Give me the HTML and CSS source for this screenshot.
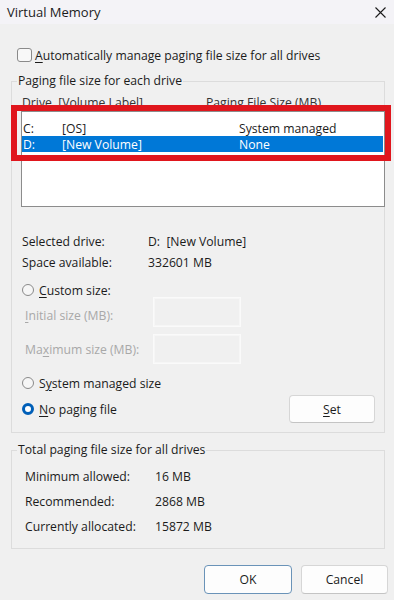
FILE: index.html
```html
<!DOCTYPE html>
<html lang="en">
<head>
    <meta charset="UTF-8">
    <meta name="viewport" content="width=device-width, initial-scale=1.0">
    <title>Virtual Memory</title>
    <link rel="stylesheet" href="styles.css">
</head>
<body>
    <div class="titlebar">
        <span class="title">Virtual Memory</span>
        <svg class="close" width="11" height="11" viewBox="0 0 11 11">
            <path d="M0.5 0.5 L10.5 10.5 M10.5 0.5 L0.5 10.5" stroke="#1b1b1b" stroke-width="1.1" fill="none"/>
        </svg>
    </div>

    <div class="dialog">
        <label class="check-row">
            <span class="checkbox"></span>
            <span><u>A</u>utomatically manage paging file size for all drives</span>
        </label>

        <fieldset class="group group-drives">
            <legend>Paging file size for each drive</legend>

            <div class="list-head">
                <span class="col-drive">Drive &nbsp;[Volume Label]</span>
                <span class="col-size">Paging File Size (MB)</span>
            </div>

            <div class="listbox">
                <div class="list-row">
                    <span class="col-letter">C:</span>
                    <span class="col-label">[OS]</span>
                    <span class="col-value">System managed</span>
                </div>
                <div class="list-row selected">
                    <span class="col-letter">D:</span>
                    <span class="col-label">[New Volume]</span>
                    <span class="col-value">None</span>
                </div>
            </div>

            <!-- annotation drawn over the screenshot -->
            <div class="highlight"></div>

            <div class="info-row first">
                <span class="info-key">Selected drive:</span>
                <span class="info-val">D: &nbsp;[New Volume]</span>
            </div>
            <div class="info-row">
                <span class="info-key">Space available:</span>
                <span class="info-val">332601 MB</span>
            </div>

            <div class="radio-row custom">
                <span class="radio"></span>
                <span><u>C</u>ustom size:</span>
            </div>
            <div class="size-row first-size">
                <span class="size-label"><u>I</u>nitial size (MB):</span>
                <span class="size-box"></span>
            </div>
            <div class="size-row">
                <span class="size-label">Ma<u>x</u>imum size (MB):</span>
                <span class="size-box"></span>
            </div>

            <div class="radio-row system">
                <span class="radio"></span>
                <span>S<u>y</u>stem managed size</span>
            </div>
            <div class="set-row">
                <div class="radio-row">
                    <span class="radio checked"></span>
                    <span><u>N</u>o paging file</span>
                </div>
                <button class="btn set-btn"><u>S</u>et</button>
            </div>
        </fieldset>

        <fieldset class="group group-total">
            <legend>Total paging file size for all drives</legend>
            <div class="total-row">
                <span class="total-key">Minimum allowed:</span>
                <span>16 MB</span>
            </div>
            <div class="total-row">
                <span class="total-key">Recommended:</span>
                <span>2868 MB</span>
            </div>
            <div class="total-row">
                <span class="total-key">Currently allocated:</span>
                <span>15872 MB</span>
            </div>
        </fieldset>

        <div class="actions">
            <button class="btn ok-btn">OK</button>
            <button class="btn">Cancel</button>
        </div>
    </div>
</body>
</html>
```

FILE: styles.css
```css
/* General */
* {
    box-sizing: border-box;
}

body {
    margin: 0;
    width: 394px;
    height: 600px;
    overflow: hidden;
    background: #f0f0f0;
    font-family: "Open Sans", "Noto Sans", sans-serif;
    font-size: 12.2px;
    color: #1b1b1b;
}

u {
    text-decoration-thickness: 1px;
    text-underline-offset: 2px;
}

/* Title bar */
.titlebar {
    height: 24px;
    background: #f4f3f7;
    display: flex;
    align-items: center;
    justify-content: space-between;
    padding: 0 8px 0 7px;
}

.title {
    font-size: 13px;
}

/* Dialog body */
.dialog {
    padding: 22px 9px 0 11px;
}

.check-row {
    display: flex;
    align-items: center;
    gap: 3px;
    height: 18px;
    padding-left: 6px;
}

.checkbox {
    width: 15px;
    height: 14px;
    border: 1px solid #8a8a8a;
    border-radius: 3px;
    background: #f8f8f8;
}

/* Group boxes */
.group {
    position: relative;
    margin: 0;
    border: 1px solid #dcdcdc;
    padding: 0 0 0 10px;
    width: 374px;
}

.group legend {
    padding: 0 1px;
    margin-left: -5px;
    line-height: 16px;
}

.group-drives {
    margin-top: 9px;
    height: 360px;
}

.list-head {
    display: flex;
    height: 16px;
    align-items: center;
    margin-top: 5px;
    color: #333;
}

.col-drive {
    width: 184px;
}

.listbox {
    margin: 1px -1px 0 -1px;
    height: 96px;
    background: #fff;
    border: 1px solid #8c8c8c;
    padding: 8px 1px 0 0;
}

.list-row {
    display: flex;
    height: 16px;
    align-items: center;
    padding-left: 1px;
}

.list-row.selected {
    background: #0078d7;
    color: #fff;
}

.col-letter {
    width: 39px;
}

.col-label {
    width: 177px;
}

.highlight {
    position: absolute;
    left: -1px;
    top: 16px;
    width: 380px;
    height: 56px;
    border: 6px solid #e0161d;
}

.info-row {
    display: flex;
    height: 21px;
    align-items: center;
}

.info-row.first {
    margin-top: 24px;
}

.info-key {
    width: 126px;
}

.radio-row {
    display: flex;
    align-items: center;
    gap: 5px;
    height: 16px;
}

.radio {
    width: 12px;
    height: 12px;
    border-radius: 50%;
    border: 1px solid #8a8a8a;
    background: #f6f6f6;
}

.radio.checked {
    border: 3.5px solid #005fb8;
    background: #fff;
}

.custom {
    margin-top: 9px;
}

.size-row {
    display: flex;
    align-items: center;
    height: 30px;
    margin-top: 7px;
    padding-left: 3px;
    color: #a8a8a8;
}

.first-size {
    margin-top: -1px;
}

.first-size .size-label {
    padding-top: 6px;
}

.size-label {
    width: 128px;
}

.size-box {
    width: 88px;
    height: 30px;
    border: 1px solid #fafafa;
    box-shadow: inset 0 0 0 1px #f6f6f6;
}

.system {
    margin-top: 11px;
}

.set-row {
    display: flex;
    align-items: center;
    justify-content: space-between;
    width: 353px;
    height: 28px;
    margin-top: 4px;
}

/* Buttons */
.btn {
    font: inherit;
    color: #1b1b1b;
    width: 87px;
    height: 29px;
    background: #fdfdfd;
    border: 1px solid #d6d6d6;
    border-bottom-color: #c4c4c4;
    border-radius: 4px;
}

.set-btn {
    width: 86px;
    height: 28px;
}

.group-total {
    margin-top: 9px;
    height: 107px;
}

.total-row {
    display: flex;
    align-items: center;
    height: 25px;
    padding-left: 3px;
}

.total-row:first-of-type {
    margin-top: 6px;
}

.total-key {
    width: 130px;
}

.actions {
    display: flex;
    justify-content: flex-end;
    gap: 9px;
    margin-top: 16px;
    margin-right: -3px;
}

.ok-btn {
    width: 88px;
    border-color: #6a93b8;
}
```
